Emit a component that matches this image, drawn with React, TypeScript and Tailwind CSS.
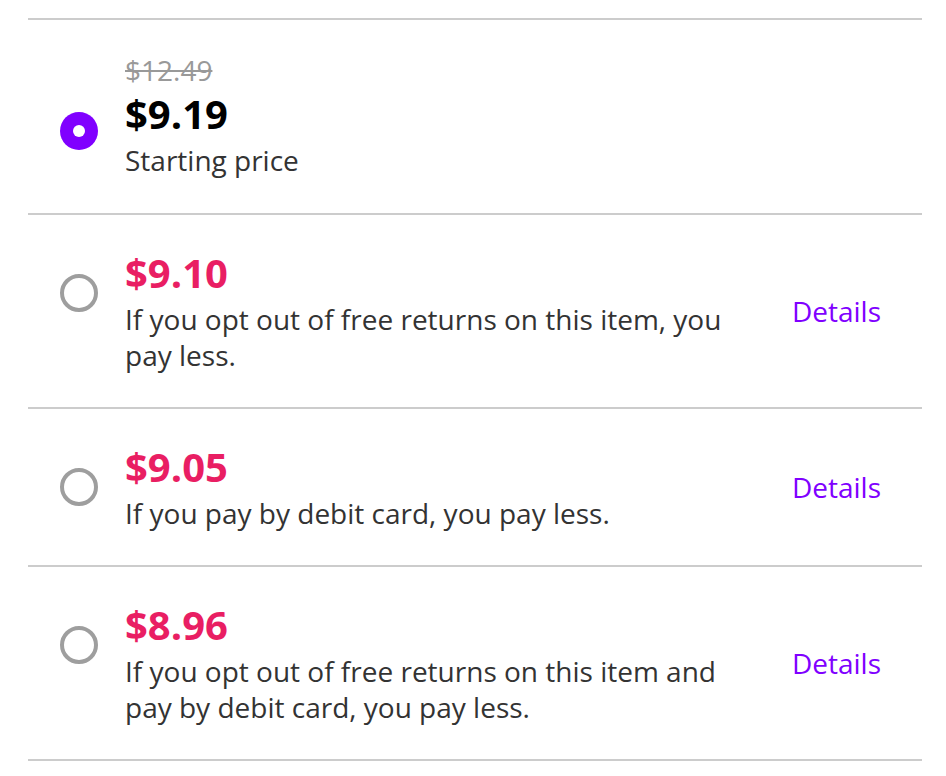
import React from "react";

type Opt = {
  strike?: string;
  price: string;
  desc: string;
  selected?: boolean;
  details?: boolean;
};

const opts: Opt[] = [
  { strike: "$12.49", price: "$9.19", desc: "Starting price", selected: true },
  { price: "$9.10", desc: "If you opt out of free returns on this item, you pay less.", details: true },
  { price: "$9.05", desc: "If you pay by debit card, you pay less.", details: true },
  { price: "$8.96", desc: "If you opt out of free returns on this item and pay by debit card, you pay less.", details: true },
];

function Radio({ selected }: { selected?: boolean }) {
  if (selected) {
    return (
      <div className="w-[38px] h-[38px] rounded-full bg-[#8000ff] flex items-center justify-center shrink-0">
        <div className="w-[12px] h-[12px] rounded-full bg-white" />
      </div>
    );
  }
  return <div className="w-[38px] h-[38px] rounded-full border-4 border-[#9e9e9e] shrink-0" />;
}

export default function App() {
  return (
    <div className="w-[946px] h-[776px] bg-white pt-[18px]" style={{ fontFamily: '"Open Sans", sans-serif' }}>
      <div className="mx-[28px] w-[894px] border-t-2 border-[#cccccc]">
        {opts.map((o, i) => (
          <div key={i} className="flex items-center border-b-2 border-[#cccccc] pl-[32px] pr-[41px]">
            <div className="flex items-start flex-1">
              <div className={o.strike ? "mt-[92px]" : "mt-[59px]"}>
                <Radio selected={o.selected} />
              </div>
              <div className={"ml-[27px] flex-1 " + (o.strike ? "pt-[32px] pb-[35px]" : "pt-[34px] pb-[34px]")}>
                {o.strike && (
                  <div className="text-[28px] leading-[36px] mb-[2px] text-[#999999] line-through">{o.strike}</div>
                )}
                <div
                  className={
                    "text-[40px] leading-[48px] mb-[4px] font-bold " + (o.selected ? "text-black" : "text-[#e91e63]")
                  }
                >
                  {o.price}
                </div>
                <div className="text-[28px] leading-[36px] text-[#333333] max-w-[620px]">{o.desc}</div>
              </div>
            </div>
            {o.details && <div className="ml-[48px] text-[28px] text-[#8000ff]">Details</div>}
          </div>
        ))}
      </div>
    </div>
  );
}
